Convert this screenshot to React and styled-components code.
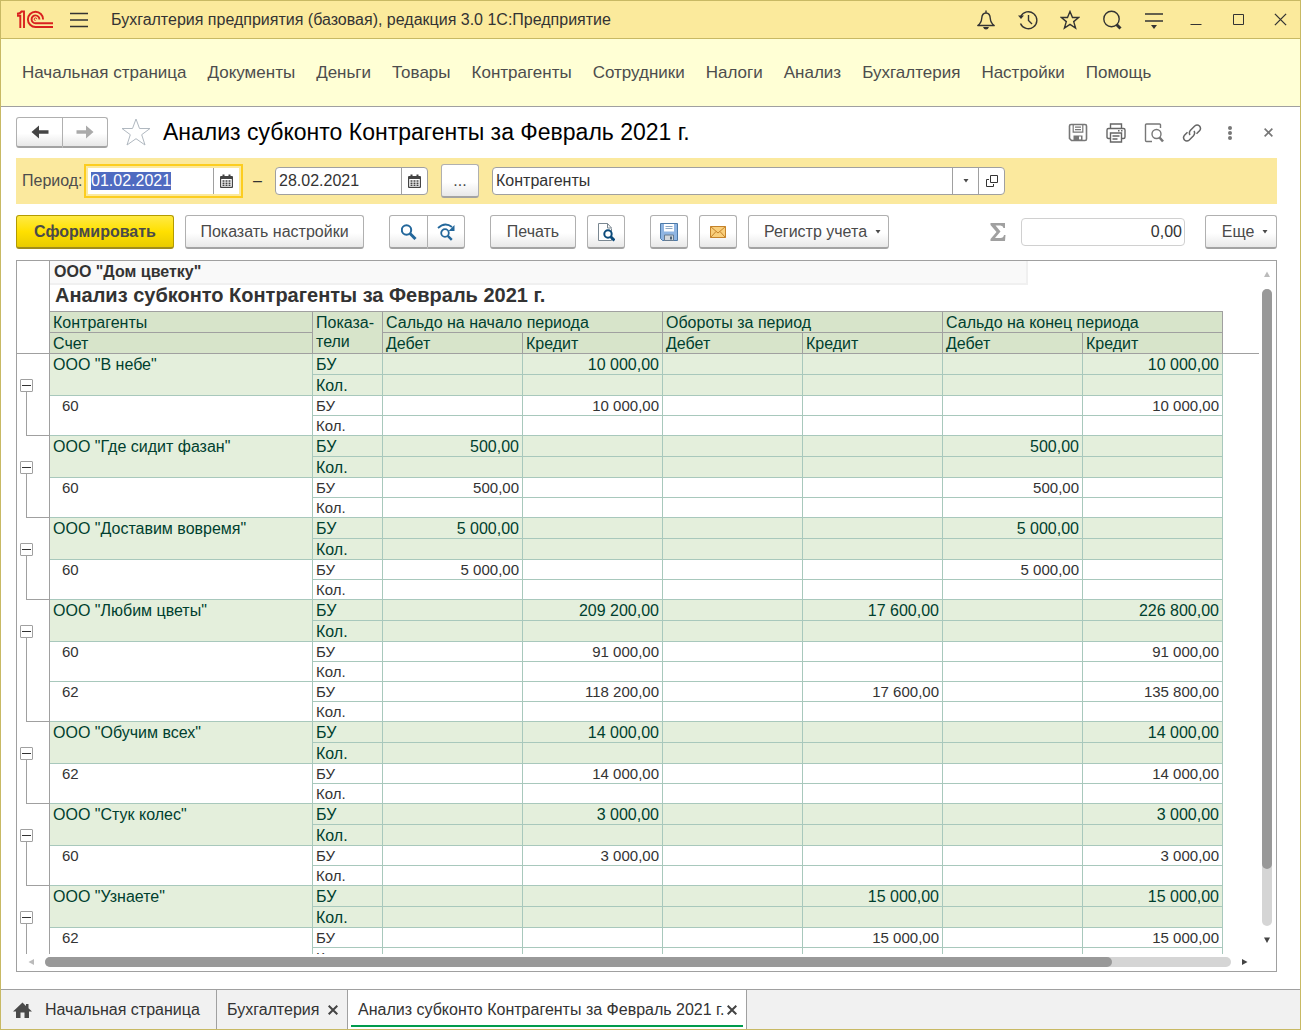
import React, { useEffect, useRef } from 'react';
import styled, { createGlobalStyle } from 'styled-components';

const GlobalStyle = createGlobalStyle`
  * {
    box-sizing: border-box;
  }

  body {
    margin: 0;
    background: #fff;
    color: #333;
    font-family: "Liberation Sans", Arial, sans-serif;
    font-size: 16px;
  }

  button, input {
    margin: 0;
    font: inherit;
    color: inherit;
  }

  svg {
    display: block;
    flex: none;
  }
`;

const WindowStyle = styled.div`
  display: flex;
  flex-direction: column;
  height: 100vh;
  border: 1px solid #c8b964;
`;

/* title bar */

const TitleBarStyle = styled.header`
  display: flex;
  align-items: center;
  flex: none;
  height: 38px;
  padding: 0 1px 0 15px;
  background: #fbea9c;
  border-bottom: 1px solid #c8b964;
`;

const AppNameStyle = styled.div`
  flex: 1;
  margin-left: 7px;
  white-space: nowrap;
`;

const IconButtonStyle = styled.button`
  display: flex;
  align-items: center;
  justify-content: center;
  width: ${props => props.$width || 38}px;
  height: 30px;
  padding: 0;
  border: 0;
  background: none;
  color: ${props => props.$color || '#333'};
  cursor: pointer;
`;

const WindowButtonsStyle = styled.div`
  display: flex;
  gap: 4px;
`;

/* main menu */

const MenuStyle = styled.nav`
  display: flex;
  align-items: center;
  flex: none;
  gap: 21px;
  height: 68px;
  padding-left: 21px;
  background: #ffffd5;
  border-bottom: 1px solid #a0a0a0;
`;

const MenuLinkStyle = styled.a`
  color: #4d4d4d;
  font-size: 17px;
  text-decoration: none;
  white-space: nowrap;
`;

/* form header */

const FormHeadStyle = styled.div`
  display: flex;
  align-items: center;
  flex: none;
  height: 51px;
  padding: 0 13px 0 15px;
`;

const FormTitleStyle = styled.h1`
  flex: 1;
  margin: 0;
  color: #000;
  font-size: 23px;
  font-weight: normal;
  white-space: nowrap;
`;

const ButtonGroupStyle = styled.div`
  display: flex;

  > button:first-child {
    border-radius: 3px 0 0 3px;
  }

  > button:last-child {
    border-left: 0;
    border-radius: 0 3px 3px 0;
  }
`;

const ButtonStyle = styled.button`
  display: flex;
  align-items: center;
  justify-content: center;
  gap: 8px;
  flex: none;
  width: ${props => props.$width}px;
  height: ${props => props.$height || 34}px;
  padding: 0 0 0 ${props => (props.$menu ? 8 : 0)}px;
  border: 1px solid ${props => (props.$primary ? '#b39b00' : '#b0b0b0')};
  border-bottom: 2px solid ${props => (props.$primary ? '#a08c1c' : '#a3a3a3')};
  border-radius: 3px;
  background: ${props => (props.$primary
    ? 'linear-gradient(#ffea45, #ffe000 50%, #e9cb00)'
    : 'linear-gradient(#fff 55%, #e8e8e8)')};
  color: #4a4a4a;
  font-weight: ${props => (props.$primary ? 'bold' : 'normal')};
  white-space: nowrap;
  cursor: pointer;
`;

/* period */

const PeriodStyle = styled.div`
  display: flex;
  align-items: center;
  flex: none;
  height: 46px;
  margin: 0 23px 0 15px;
  padding-left: 6px;
  background: #fbe99e;
`;

const PeriodLabelStyle = styled.label`
  width: 65px;
  color: #4d4d4d;
`;

const FieldStyle = styled.div`
  display: flex;
  width: ${props => props.$width}px;
  height: 28px;
  border: 1px solid ${props => (props.$focused ? '#fbe99e' : props.$color || '#a0a0a0')};
  border-radius: ${props => (props.$focused ? 0 : 4)}px;
  background: #fff;
  outline: ${props => (props.$focused ? '2px solid #fccd20' : 'none')};
  outline-offset: 1px;

  > button {
    width: 26px;
    height: auto;
    border-left: 1px solid #a0a0a0;
  }
`;

const InputStyle = styled.input`
  flex: 1;
  min-width: 0;
  padding: 0 2px 0 3px;
  border: 0;
  outline: 0;
  background: transparent;
  text-align: ${props => props.$align || 'left'};

  &::selection {
    background: #4f6bc1;
    color: #fff;
  }
`;

const DashStyle = styled.span`
  width: 35px;
  text-align: center;
`;

const PeriodPickStyle = styled.div`
  margin: 0 13px;
`;

/* command bar */

const CommandBarStyle = styled.div`
  display: flex;
  align-items: center;
  flex: none;
  gap: 25px;
  margin: 11px 23px 11px 15px;
`;

const CommandSetStyle = styled.div`
  display: flex;
  gap: 11px;
`;

const TotalsStyle = styled.div`
  display: flex;
  align-items: center;
  gap: 15px;
  margin-left: auto;
`;

const MoreStyle = styled.div`
  margin-left: 5px;
`;

/* report */

const ReportStyle = styled.main`
  display: grid;
  grid-template-columns: minmax(0, 1fr) 17px;
  grid-template-rows: minmax(0, 1fr) 17px;
  flex: 1;
  min-height: 0;
  margin: 0 23px 17px 15px;
  border: 1px solid #a0a0a0;
`;

const SheetStyle = styled.div`
  overflow: hidden;
`;

const TableStyle = styled.table`
  width: 100%;
  table-layout: fixed;
  border-collapse: separate;
  border-spacing: 0;

  td, th {
    padding: 0 3px;
    font-weight: normal;
    text-align: left;
    white-space: nowrap;
  }
`;

const GutterHeadStyle = styled.td`
  border-right: 1px solid #a0a0a0;
  border-bottom: 1px solid #a0a0a0;
`;

const CompanyCellStyle = styled.td`
  && {
    height: 25px;
    padding: 0;
    vertical-align: top;
  }
`;

const CompanyStyle = styled.div`
  width: 978px;
  height: 24px;
  padding-left: 4px;
  border-right: 2px solid #f0f0f0;
  border-bottom: 2px solid #f0f0f0;
  background: #f9f9f9;
  font-weight: bold;
  line-height: 21px;
`;

const CaptionCellStyle = styled.td`
  && {
    height: 26px;
    padding-left: 5px;
    border-bottom: 1px solid #a0a0a0;
    font-size: 20px;
    font-weight: bold;
    line-height: 18px;
    vertical-align: top;
  }
`;

const HeadCellStyle = styled.th`
  && {
    height: 21px;
    padding-top: 1px;
    border-right: 1px solid #a0a0a0;
    border-bottom: 1px solid #a0a0a0;
    background: #d7e4ca;
    color: #003f2f;
    line-height: 19px;
    vertical-align: top;
  }
`;

const HeadTailStyle = styled.td`
  border-bottom: 1px solid #a0a0a0;
`;

const GutterStyle = styled.td`
  && {
    padding: 25px 3px 0;
    border-right: 1px solid #a0a0a0;
    background:
      linear-gradient(#a0a0a0, #a0a0a0) 9px 38px / 1px 100% no-repeat,
      linear-gradient(#a0a0a0, #a0a0a0) 9px 100% / 100% 1px no-repeat;
    vertical-align: top;
  }
`;

const ToggleStyle = styled.button`
  display: flex;
  align-items: center;
  justify-content: center;
  width: 13px;
  height: 13px;
  padding: 0;
  border: 1px solid #a0a0a0;
  border-radius: 1px;
  background: #fff;

  &::before {
    content: "";
    width: 9px;
    height: 1px;
    background: #333;
  }
`;

const CellStyle = styled.td`
  height: ${props => (props.$total ? 21 : 20)}px;
  border-right: 1px solid #a8c8bc;
  border-bottom: 1px solid #a8c8bc;
  background: ${props => (props.$total ? '#e4efdc' : '#fff')};
  color: ${props => (props.$total ? '#003f2f' : '#333')};
  font-size: ${props => (props.$total ? 16 : 15)}px;
  line-height: 19px;

  && {
    padding-top: ${props => (props.$total ? 1 : 0)}px;
    padding-left: ${props => (props.$indent ? 12 : 3)}px;
    text-align: ${props => (props.$number ? 'right' : 'left')};
    vertical-align: top;
  }
`;

const VScrollStyle = styled.div`
  display: flex;
  flex-direction: column;
  align-items: center;
  justify-content: space-between;
  padding: 10px 1px 11px 0;
`;

const HScrollStyle = styled.div`
  display: flex;
  align-items: center;
  justify-content: space-between;
  padding: 0 11px 2px 11px;
`;

const TrackStyle = styled.div`
  display: flex;
  flex-direction: ${props => (props.$vertical ? 'column' : 'row')};
  flex: 1;
  width: ${props => (props.$vertical ? '10px' : 'auto')};
  height: ${props => (props.$vertical ? 'auto' : '10px')};
  margin: ${props => (props.$vertical ? '12px 0 11px' : '0 11px')};
  border-radius: 5px;
  background: #d5d5d5;
`;

const ThumbStyle = styled.div`
  flex: 0 0 ${props => props.$size}%;
  border-radius: 5px;
  background: #999;
`;

/* open windows */

const TabsStyle = styled.footer`
  display: flex;
  flex: none;
  height: 40px;
  border-top: 1px solid #a0a0a0;
  background: #f1f1f1;
`;

const TabStyle = styled.div`
  display: flex;
  align-items: center;
  justify-content: space-between;
  width: ${props => props.$width}px;
  border-right: 1px solid #a0a0a0;
  padding: 0 6px 0 ${props => (props.$home ? 12 : 10)}px;

  ${props => props.$active && `
    background: linear-gradient(#009b4d, #009b4d) 50% 35px / calc(100% - 6px) 2px no-repeat #fff;
  `}
`;

const TabLinkStyle = styled.a`
  display: flex;
  align-items: center;
  gap: 13px;
  color: #333;
  text-decoration: none;
  white-space: nowrap;
`;

const menu = ['Начальная страница', 'Документы', 'Деньги', 'Товары', 'Контрагенты', 'Сотрудники', 'Налоги', 'Анализ', 'Бухгалтерия', 'Настройки', 'Помощь'];

// values: opening debit/credit, turnover debit/credit, closing debit/credit
const groups = [
  { name: 'ООО "В небе"', values: ['', '10 000,00', '', '', '', '10 000,00'], accounts: [
    { code: '60', values: ['', '10 000,00', '', '', '', '10 000,00'] },
  ] },
  { name: 'ООО "Где сидит фазан"', values: ['500,00', '', '', '', '500,00', ''], accounts: [
    { code: '60', values: ['500,00', '', '', '', '500,00', ''] },
  ] },
  { name: 'ООО "Доставим вовремя"', values: ['5 000,00', '', '', '', '5 000,00', ''], accounts: [
    { code: '60', values: ['5 000,00', '', '', '', '5 000,00', ''] },
  ] },
  { name: 'ООО "Любим цветы"', values: ['', '209 200,00', '', '17 600,00', '', '226 800,00'], accounts: [
    { code: '60', values: ['', '91 000,00', '', '', '', '91 000,00'] },
    { code: '62', values: ['', '118 200,00', '', '17 600,00', '', '135 800,00'] },
  ] },
  { name: 'ООО "Обучим всех"', values: ['', '14 000,00', '', '', '', '14 000,00'], accounts: [
    { code: '62', values: ['', '14 000,00', '', '', '', '14 000,00'] },
  ] },
  { name: 'ООО "Стук колес"', values: ['', '3 000,00', '', '', '', '3 000,00'], accounts: [
    { code: '60', values: ['', '3 000,00', '', '', '', '3 000,00'] },
  ] },
  { name: 'ООО "Узнаете"', values: ['', '', '', '15 000,00', '', '15 000,00'], accounts: [
    { code: '62', values: ['', '', '', '15 000,00', '', '15 000,00'] },
  ] },
];

const Icon = ({ w = 20, h = w, box, children, stroke = 'currentColor', sw = 1.5, fill = 'none' }) => (
  <svg width={w} height={h} viewBox={box || `0 0 ${w} ${h}`} fill={fill} stroke={stroke} strokeWidth={sw} aria-hidden="true">
    {children}
  </svg>
);

const Logo = () => (
  <Icon w={38} h={20} stroke="#d9211f" sw={1.9}>
    <path d="M1 5.700h3.300V18M8 18V1.500H5.500Q4.500 3.500 1 3.800" />
    <path d="M37 17H19.500a7.600 7.600 0 1 1 7.600-7.600" />
    <path d="M37 13.200H19.500a3.900 3.900 0 1 1 3.900-3.800" />
    <path d="M20.800 9.200a1.300 1.300 0 1 0-1.300 1.300" strokeWidth="1" />
  </Icon>
);

const Caret = () => (
  <Icon w={6} h={4} stroke="none" fill="#4a4a4a"><path d="M0.500 0h5L3 3.500z" /></Icon>
);

const Calendar = () => (
  <Icon w={13} h={14} stroke="none" fill="#444">
    <path fillRule="evenodd" d="M1 2h1.500V0.500h2V2h4V0.500h2V2H12q1 0 1 1v10q0 1-1 1H1q-1 0-1-1V3q0-1 1-1zM1.200 5v7.800h10.600V5z" />
    <path d="M2.500 6.200h2v1.600h-2zM5.500 6.200h2v1.600h-2zM8.500 6.200h2v1.600h-2zM2.500 8.500h2v1.400h-2zM5.500 8.500h2v1.400h-2zM8.500 8.500h2v1.400h-2zM2.500 10.600h2V12h-2zM5.500 10.600h2V12h-2zM8.500 10.600h2V12h-2z" />
  </Icon>
);

const Cross = ({ size = 10, sw = 1.5 }) => (
  <Icon w={size} sw={sw} box="0 0 10 10"><path d="M0.700 0.700l8.600 8.600M9.300 0.700L0.700 9.300" /></Icon>
);

const Arrow = ({ dir, color }) => {
  const shapes = {
    up: 'M3 0.500L6 6H0z',
    down: 'M0 0.500h6L3 6z',
    left: 'M0.500 3L6 0v6z',
    right: 'M0 0v6l5.500-3z',
  };
  return <Icon w={6} stroke="none" fill={color}><path d={shapes[dir]} /></Icon>;
};

function Values({ total, values }) {
  return values.map((value, i) => <CellStyle key={i} $total={total} $number>{value}</CellStyle>);
}

function Group({ group }) {
  const empty = ['', '', '', '', '', ''];

  return (
    <tbody>
      <tr>
        <GutterStyle rowSpan={2 + group.accounts.length * 2}>
          <ToggleStyle aria-label="Свернуть" />
        </GutterStyle>
        <CellStyle $total rowSpan={2}>{group.name}</CellStyle>
        <CellStyle $total>БУ</CellStyle>
        <Values total values={group.values} />
      </tr>
      <tr>
        <CellStyle $total>Кол.</CellStyle>
        <Values total values={empty} />
      </tr>
      {group.accounts.map(account => (
        <React.Fragment key={account.code}>
          <tr>
            <CellStyle $indent rowSpan={2}>{account.code}</CellStyle>
            <CellStyle>БУ</CellStyle>
            <Values values={account.values} />
          </tr>
          <tr>
            <CellStyle>Кол.</CellStyle>
            <Values values={empty} />
          </tr>
        </React.Fragment>
      ))}
    </tbody>
  );
}

function Report() {
  return (
    <ReportStyle>
      <SheetStyle>
        <TableStyle>
          <colgroup>
            <col width="33" />
            <col width="263" />
            <col width="70" />
            <col width="140" />
            <col width="140" />
            <col width="140" />
            <col width="140" />
            <col width="140" />
            <col width="140" />
            <col />
          </colgroup>
          <thead>
            <tr>
              <GutterHeadStyle rowSpan={4} />
              <CompanyCellStyle colSpan={8}><CompanyStyle>ООО "Дом цветку"</CompanyStyle></CompanyCellStyle>
              <td />
            </tr>
            <tr>
              <CaptionCellStyle colSpan={8}>Анализ субконто Контрагенты за Февраль 2021 г.</CaptionCellStyle>
              <td />
            </tr>
            <tr>
              <HeadCellStyle>Контрагенты</HeadCellStyle>
              <HeadCellStyle rowSpan={2}>Показа-<br />тели</HeadCellStyle>
              <HeadCellStyle colSpan={2}>Сальдо на начало периода</HeadCellStyle>
              <HeadCellStyle colSpan={2}>Обороты за период</HeadCellStyle>
              <HeadCellStyle colSpan={2}>Сальдо на конец периода</HeadCellStyle>
              <td />
            </tr>
            <tr>
              <HeadCellStyle>Счет</HeadCellStyle>
              <HeadCellStyle>Дебет</HeadCellStyle>
              <HeadCellStyle>Кредит</HeadCellStyle>
              <HeadCellStyle>Дебет</HeadCellStyle>
              <HeadCellStyle>Кредит</HeadCellStyle>
              <HeadCellStyle>Дебет</HeadCellStyle>
              <HeadCellStyle>Кредит</HeadCellStyle>
              <HeadTailStyle />
            </tr>
          </thead>
          {groups.map(group => <Group key={group.name} group={group} />)}
        </TableStyle>
      </SheetStyle>
      <VScrollStyle>
        <Arrow dir="up" color="#bbb" />
        <TrackStyle $vertical><ThumbStyle $size={91} /></TrackStyle>
        <Arrow dir="down" color="#444" />
      </VScrollStyle>
      <HScrollStyle>
        <Arrow dir="left" color="#bbb" />
        <TrackStyle><ThumbStyle $size={90} /></TrackStyle>
        <Arrow dir="right" color="#444" />
      </HScrollStyle>
    </ReportStyle>
  );
}

function App() {
  const dateFrom = useRef(null);

  useEffect(() => {
    dateFrom.current.focus();
    dateFrom.current.select();
  }, []);

  return (
    <>
      <GlobalStyle />
      <WindowStyle>
        <TitleBarStyle>
          <Logo />
          <IconButtonStyle $width={50} aria-label="Меню">
            <Icon w={18} h={16} sw={1.4}><path d="M0 1.500h18M0 8h18M0 14.500h18" /></Icon>
          </IconButtonStyle>
          <AppNameStyle>Бухгалтерия предприятия (базовая), редакция 3.0 1С:Предприятие</AppNameStyle>
          <WindowButtonsStyle>
            <IconButtonStyle aria-label="Уведомления">
              <Icon sw={1.4}>
                <path d="M10 0.500V3M1.800 15.500c2.700-2 3.700-4 3.900-7C5.900 4.800 7.500 3 10 3s4.100 1.800 4.300 5.500c.2 3 1.200 5 3.900 7z" strokeLinejoin="round" />
                <path d="M7 17h6q-1 2.500-3 2.500T7 17z" fill="currentColor" stroke="none" />
              </Icon>
            </IconButtonStyle>
            <IconButtonStyle aria-label="История">
              <Icon sw={1.4}>
                <path d="M2.700 6.500A8.500 8.500 0 1 1 2.500 13.500" />
                <path d="M10.500 5v5.500l3.500 3.500" />
                <path d="M0 5.500h6L3 9z" fill="currentColor" stroke="none" />
              </Icon>
            </IconButtonStyle>
            <IconButtonStyle aria-label="Избранное">
              <Icon sw={1.4}><path d="M10 1.500l2.500 6h6.200l-5 4.100 1.900 6.400L10 14.300 4.400 18l1.900-6.400-5-4.100h6.200z" /></Icon>
            </IconButtonStyle>
            <IconButtonStyle aria-label="Поиск">
              <Icon sw={1.4}>
                <circle cx="9.500" cy="9" r="7.700" />
                <path d="M14.500 14.500l4 4" strokeWidth="3" />
              </Icon>
            </IconButtonStyle>
            <IconButtonStyle aria-label="Сервис">
              <Icon w={18} h={18} sw={1.4}>
                <path d="M0 3h18M0 10h18" />
                <path d="M6 14h6l-3 4z" fill="currentColor" stroke="none" />
              </Icon>
            </IconButtonStyle>
            <IconButtonStyle aria-label="Свернуть окно">
              <Icon w={12} h={12} sw={1}><path d="M0.500 10.500h11" /></Icon>
            </IconButtonStyle>
            <IconButtonStyle aria-label="Развернуть окно">
              <Icon w={12} h={12} sw={1}><path d="M1.500 0.500h10v10h-10z" /></Icon>
            </IconButtonStyle>
            <IconButtonStyle aria-label="Закрыть окно"><Cross size={13} sw={1} /></IconButtonStyle>
          </WindowButtonsStyle>
        </TitleBarStyle>

        <MenuStyle>
          {menu.map(item => <MenuLinkStyle key={item} href="#">{item}</MenuLinkStyle>)}
        </MenuStyle>

        <FormHeadStyle>
          <ButtonGroupStyle>
            <ButtonStyle $width={47} $height={31} aria-label="Назад">
              <Icon w={18} h={14} stroke="none" fill="#444"><path d="M0.500 7L8 0.500v4.700h9.500v3.600H8v4.700z" /></Icon>
            </ButtonStyle>
            <ButtonStyle $width={45} $height={31} aria-label="Вперед">
              <Icon w={18} h={14} stroke="none" fill="#aaa"><path d="M17.500 7L10 0.500v4.700H0.500v3.600H10v4.700z" /></Icon>
            </ButtonStyle>
          </ButtonGroupStyle>
          <IconButtonStyle $width={55} $color="#b0b8c0" aria-label="В избранное">
            <Icon w={30} h={30} sw={1}><path d="M15 1l3.500 9.500H29l-8.300 6.200 3.300 10.300-9-6.300L6 27l3.300-10.300L1 10.500h10.500z" /></Icon>
          </IconButtonStyle>
          <FormTitleStyle>Анализ субконто Контрагенты за Февраль 2021 г.</FormTitleStyle>
          <IconButtonStyle $color="#777" aria-label="Сохранить">
            <Icon sw={1.6}>
              <path d="M3 1.500h14q1.500 0 1.500 1.500v13q0 1.500-1.500 1.500H3.500L1.500 15.500V3q0-1.500 1.500-1.500z" />
              <path d="M5.200 2v7.200h9.600V2M7 4.200h6M7 6.600h6" strokeWidth="1.200" />
              <path fillRule="evenodd" d="M5.500 12.500h9v5h-9zM11 13.500h2v3h-2z" fill="currentColor" stroke="none" />
            </Icon>
          </IconButtonStyle>
          <IconButtonStyle $color="#666" aria-label="Печать">
            <Icon sw={1.4}>
              <path d="M4.500 5.500V1h11v4.500M4.500 15.500h-2q-1.500 0-1.500-1.500V7q0-1.500 1.500-1.500h15Q19 5.500 19 7v7q0 1.500-1.500 1.500h-2" />
              <path d="M4.500 10h11v9h-11zM6.500 13h7M6.500 16h5M12 7.800h1.500M15 7.800h1.500" />
            </Icon>
          </IconButtonStyle>
          <IconButtonStyle $color="#777" aria-label="Предварительный просмотр">
            <Icon sw={1.4}>
              <path d="M16.500 5V2q0-1-1-1h-13q-1 0-1 1v15.500q0 1 1 1H8" />
              <circle cx="12.500" cy="11" r="4.500" />
              <path d="M15.500 14.500l3.500 4" strokeWidth="2.600" />
            </Icon>
          </IconButtonStyle>
          <IconButtonStyle $color="#666" aria-label="Получить ссылку">
            <Icon sw={1.5}>
              <path d="M8 12q-1.500-2.500.5-4.700l4.200-4.300q2.500-2 4.800 0 2 2.500 0 4.800L14.500 10.800" />
              <path d="M12 8q1.500 2.500-.5 4.700L7.300 17q-2.500 2-4.800 0-2-2.500 0-4.800L5.500 9.200" />
            </Icon>
          </IconButtonStyle>
          <IconButtonStyle $color="#777" aria-label="Дополнительно">
            <Icon w={4} h={14} stroke="none" fill="currentColor">
              <circle cx="2" cy="2" r="2" />
              <circle cx="2" cy="7" r="2" />
              <circle cx="2" cy="12" r="2" />
            </Icon>
          </IconButtonStyle>
          <IconButtonStyle $color="#777" aria-label="Закрыть"><Cross size={9} sw={1.8} /></IconButtonStyle>
        </FormHeadStyle>

        <PeriodStyle>
          <PeriodLabelStyle htmlFor="date-from">Период:</PeriodLabelStyle>
          <FieldStyle $width={153} $focused>
            <InputStyle id="date-from" ref={dateFrom} defaultValue="01.02.2021" />
            <IconButtonStyle aria-label="Выбрать начало"><Calendar /></IconButtonStyle>
          </FieldStyle>
          <DashStyle>–</DashStyle>
          <FieldStyle $width={153}>
            <InputStyle aria-label="Конец периода" defaultValue="28.02.2021" />
            <IconButtonStyle aria-label="Выбрать конец"><Calendar /></IconButtonStyle>
          </FieldStyle>
          <PeriodPickStyle><ButtonStyle $width={38}>...</ButtonStyle></PeriodPickStyle>
          <FieldStyle $width={513}>
            <InputStyle aria-label="Вид субконто" defaultValue="Контрагенты" />
            <IconButtonStyle aria-label="Показать список"><Caret /></IconButtonStyle>
            <IconButtonStyle aria-label="Открыть">
              <Icon w={12} h={12} sw={1} stroke="#333"><path d="M4.500 0.500h7v7h-7zM3 4.500H0.500v7h7V9" /></Icon>
            </IconButtonStyle>
          </FieldStyle>
        </PeriodStyle>

        <CommandBarStyle>
          <CommandSetStyle>
            <ButtonStyle $width={158} $primary>Сформировать</ButtonStyle>
            <ButtonStyle $width={179}>Показать настройки</ButtonStyle>
          </CommandSetStyle>
          <ButtonGroupStyle>
            <ButtonStyle $width={39} aria-label="Найти">
              <Icon w={16} stroke="#23679b" sw={2}>
                <circle cx="5.500" cy="6" r="4.700" />
                <path d="M9 9.500l5.500 5.500" strokeWidth="3" />
              </Icon>
            </ButtonStyle>
            <ButtonStyle $width={37} aria-label="Найти далее">
              <Icon w={18} stroke="#23679b" sw={1.8}>
                <path d="M1 5Q8-1.500 15 4" />
                <path d="M17.500 2v6h-6z" fill="#23679b" stroke="none" />
                <circle cx="8" cy="10" r="3.800" />
                <path d="M10.800 12.800l4 4" strokeWidth="2.400" />
              </Icon>
            </ButtonStyle>
          </ButtonGroupStyle>
          <CommandSetStyle>
            <ButtonStyle $width={86}>Печать</ButtonStyle>
            <ButtonStyle $width={38} aria-label="Просмотр">
              <Icon w={18} h={20} stroke="#7a8791" sw={1}>
                <path d="M14.500 6.500v12h-13v-17h9l4 4.500h-4v-4.500" fill="#fff" />
                <circle cx="11" cy="12" r="3.700" stroke="#0b4a7a" strokeWidth="2" fill="#fff" />
                <path d="M13.500 14.500l4 4" stroke="#0b4a7a" strokeWidth="3" />
              </Icon>
            </ButtonStyle>
          </CommandSetStyle>
          <CommandSetStyle>
            <ButtonStyle $width={38} aria-label="Сохранить отчет">
              <Icon w={18} h={18} stroke="#4d7aa8" sw={1}>
                <path d="M0.500 0.500h17v17h-15l-2-2z" fill="#8fb5e2" />
                <path d="M4 1h10v7.500H4z" fill="#fff" stroke="none" />
                <path d="M5.500 3.500h7M5.500 5.500h7" stroke="#8fa9c4" />
                <path d="M4.500 12h9v5.500h-9z" fill="#d3d8dc" stroke="#687c90" />
                <path d="M10 13.500h2v3h-2z" fill="#4f6478" stroke="none" />
              </Icon>
            </ButtonStyle>
            <ButtonStyle $width={38} aria-label="Отправить по почте">
              <Icon w={16} h={12} stroke="#c5832b" sw={1}>
                <path d="M0.500 0.500h15v11H0.500z" fill="#f9cf7c" />
                <path d="M0.500 0.500L8 7l7.500-6.500M0.500 11.500L6 5.500M15.500 11.500L10 5.500" />
              </Icon>
            </ButtonStyle>
            <ButtonStyle $width={141} $menu>Регистр учета <Caret /></ButtonStyle>
          </CommandSetStyle>
          <TotalsStyle>
            <Icon w={16} h={18} stroke="none" fill="#a0a0a0">
              <path d="M0.500 0h14.500v5h-1.500q-.5-2.500-3-2.500H5.500l5 6-5.500 6.500h5.500q3 0 3.500-3h1.500L15 18H0.500v-2l6-7-6-7z" />
            </Icon>
            <FieldStyle $width={164} $color="#d0d0d0">
              <InputStyle $align="right" aria-label="Сумма" defaultValue="0,00" />
            </FieldStyle>
            <MoreStyle><ButtonStyle $width={72} $menu>Еще <Caret /></ButtonStyle></MoreStyle>
          </TotalsStyle>
        </CommandBarStyle>

        <Report />

        <TabsStyle>
          <TabStyle $width={216} $home>
            <TabLinkStyle href="#">
              <Icon w={19} h={16} stroke="none" fill="#4a4a4a"><path d="M9.500 0.500L13 4V2h2.500v4.300L19 9.500h-3V16h-4.500v-5.500h-4V16H3V9.500H0z" /></Icon>
              Начальная страница
            </TabLinkStyle>
          </TabStyle>
          <TabStyle $width={131}>
            <TabLinkStyle href="#">Бухгалтерия</TabLinkStyle>
            <IconButtonStyle $width={16} $color="#444" aria-label="Закрыть вкладку"><Cross sw={2} /></IconButtonStyle>
          </TabStyle>
          <TabStyle $width={399} $active>
            <TabLinkStyle href="#">Анализ субконто Контрагенты за Февраль 2021 г.</TabLinkStyle>
            <IconButtonStyle $width={16} $color="#444" aria-label="Закрыть вкладку"><Cross sw={2} /></IconButtonStyle>
          </TabStyle>
        </TabsStyle>
      </WindowStyle>
    </>
  );
}

export default App;
